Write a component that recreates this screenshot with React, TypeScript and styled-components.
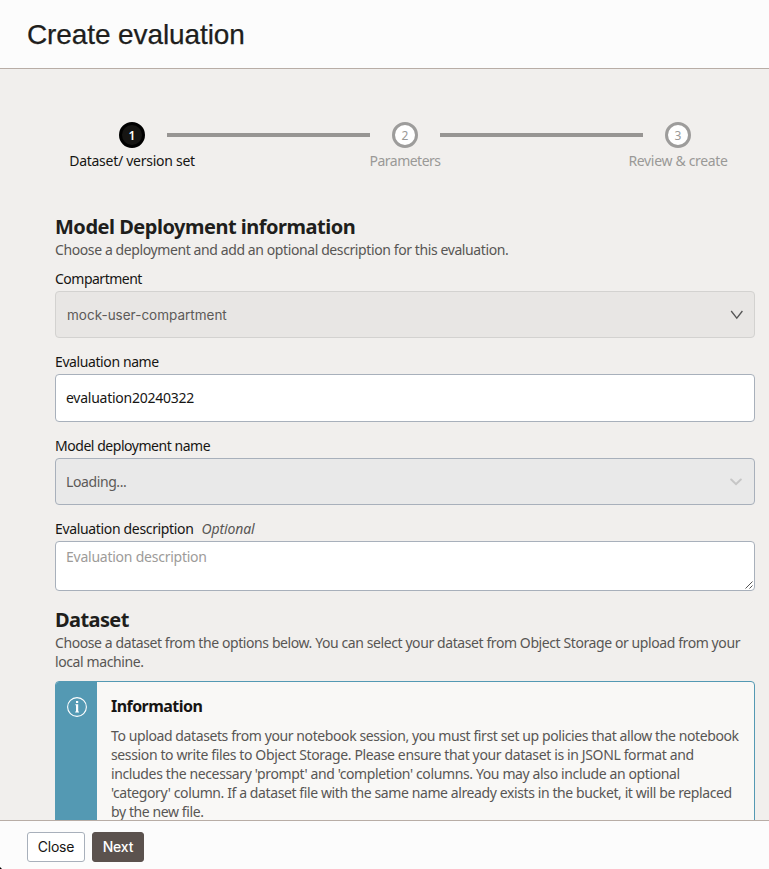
import React from 'react';
import styled, { createGlobalStyle } from 'styled-components';

const GlobalStyle = createGlobalStyle`
  * { box-sizing: border-box; }
  body { margin: 0; }
`;

const Page = styled.div`
  display: flex;
  flex-direction: column;
  width: 100%;
  height: 869px;
  overflow: hidden;
  background: #f1efed;
  color: #161513;
  font: 14px/19px 'Noto Sans', sans-serif;
`;

const Header = styled.header`
  flex: none;
  height: 69px;
  padding: 17px 27px 0;
  background: #fcfcfc;
  border-bottom: 1px solid #b8ada6;
`;

const Title = styled.h1`
  margin: 0;
  font: 400 28px/36px 'Liberation Sans', sans-serif;
  letter-spacing: -0.1px;
  color: #201e1c;
  -webkit-text-stroke: 0.25px #201e1c;
`;

const Content = styled.main`
  flex: 1;
  min-height: 0;
  overflow: hidden;
  padding: 53px 14px 0 55px;
`;

const Stepper = styled.div`
  display: flex;
  padding-left: 42px;
`;

const StepItem = styled.div<{ $active?: boolean }>`
  flex: none;
  width: 70px;
  display: flex;
  flex-direction: column;
  align-items: center;
  color: ${(p) => (p.$active ? '#161513' : '#9a9997')};
`;

const StepCircle = styled.div<{ $active?: boolean }>`
  width: 26px;
  height: 26px;
  display: flex;
  align-items: center;
  justify-content: center;
  border-radius: 50%;
  border: 3px solid ${(p) => (p.$active ? '#000' : '#9d9c9b')};
  background: ${(p) => (p.$active ? '#161513' : '#fff')};
  color: ${(p) => (p.$active ? '#fff' : '#9a9997')};
  font-size: 12px;
  font-weight: ${(p) => (p.$active ? 600 : 400)};
`;

const Line = styled.span<{ $spacing?: number }>`
  display: block;
  white-space: nowrap;
  letter-spacing: ${(p) => p.$spacing ?? -0.4}px;
`;

const StepLabel = styled(Line)`
  margin-top: 3px;
`;

const StepBar = styled.div`
  flex: none;
  width: 203px;
  height: 4px;
  margin-top: 11px;
  background: #979593;
`;

const SectionTitle = styled.h2<{ $spacing: number; $top: number }>`
  margin: ${(p) => p.$top}px 0 -1px;
  font-size: 20px;
  line-height: 28px;
  font-weight: 700;
  letter-spacing: ${(p) => p.$spacing}px;
  white-space: nowrap;
  color: #201e1c;
`;

const Description = styled.p`
  margin: 0;
  color: #585654;
`;

const Label = styled.label<{ $top: number }>`
  display: flex;
  gap: 8px;
  height: 19px;
  margin: ${(p) => p.$top}px 0 3px;
`;

const Optional = styled(Line)`
  font-style: italic;
  color: #585654;
`;

const Field = styled.div<{ $kind: 'readonly' | 'input' | 'loading' }>`
  display: flex;
  align-items: center;
  justify-content: space-between;
  height: ${(p) => (p.$kind === 'input' ? 48 : 47)}px;
  padding: ${(p) => ({ readonly: '1px 11px 0', input: '0 12px 2px 10px', loading: '0 12px 0 10px' })[p.$kind]};
  border: 1px solid ${(p) => (p.$kind === 'readonly' ? '#d3d2d0' : '#a8b0bb')};
  border-radius: 4px;
  background: ${(p) => ({ readonly: '#e8e6e4', input: '#fff', loading: '#e9e9e9' })[p.$kind]};
  color: ${(p) => (p.$kind === 'input' ? '#161513' : '#5c5a58')};
`;

const SystemLine = styled(Line)`
  font-family: Inter, sans-serif;
  font-size: 13.5px;
`;

const TextArea = styled.div`
  display: flex;
  justify-content: space-between;
  height: 50px;
  padding: 5px 1px 0 10px;
  border: 1px solid #a8b0bb;
  border-radius: 4px;
  background: #fff;
  color: #9d9b99;
`;

const Grip = styled.svg`
  flex: none;
  align-self: flex-end;
  margin-bottom: 1px;
`;

const InfoBox = styled.section`
  display: flex;
  height: 190px;
  margin-top: 10px;
  border: 1px solid #5499b3;
  border-radius: 4px;
  overflow: hidden;
  background: #f9f8f6;
`;

const InfoRail = styled.div`
  flex: none;
  width: 41px;
  padding: 14px 0 0 10px;
  background: #5499b3;
`;

const InfoBody = styled.div`
  padding: 14px 0 0 14px;
  color: #585654;
`;

const InfoTitle = styled.h3<{ $spacing: number }>`
  margin: 0 0 9px;
  font-size: 16px;
  line-height: 21px;
  font-weight: 700;
  letter-spacing: ${(p) => p.$spacing}px;
  color: #161513;
`;

const Footer = styled.footer`
  position: relative;
  flex: none;
  display: flex;
  gap: 7px;
  height: 49px;
  padding: 11px 27px 0;
  background: #fcfcfc;
  border-top: 1px solid #b8ada6;
`;

const Button = styled.button<{ $primary?: boolean }>`
  width: ${(p) => (p.$primary ? 52 : 58)}px;
  height: 30px;
  padding: 0;
  border: 1px solid ${(p) => (p.$primary ? '#5b524e' : '#a8b0bb')};
  border-radius: 3px;
  background: ${(p) => (p.$primary ? '#5b524e' : '#fff')};
  color: ${(p) => (p.$primary ? '#fff' : '#161513')};
  font: ${(p) => (p.$primary ? 500 : 400)} 14px/20px Inter, sans-serif;
  letter-spacing: -0.2px;
`;

const Corner = styled.div`
  position: absolute;
  left: 0;
  bottom: 0;
  width: 2px;
  height: 2px;
  background: #000;
  clip-path: polygon(0 0, 100% 100%, 0 100%);
`;

export default function App() {
  return (
    <Page>
      <GlobalStyle />
      <Header>
        <Title>Create evaluation</Title>
      </Header>
      <Content>
        <Stepper>
          <StepItem $active>
            <StepCircle $active>1</StepCircle>
            <StepLabel $spacing={-0.27}>Dataset/ version set</StepLabel>
          </StepItem>
          <StepBar />
          <StepItem>
            <StepCircle>2</StepCircle>
            <StepLabel $spacing={-0.5}>Parameters</StepLabel>
          </StepItem>
          <StepBar />
          <StepItem>
            <StepCircle>3</StepCircle>
            <StepLabel $spacing={-0.33}>Review &amp; create</StepLabel>
          </StepItem>
        </Stepper>

        <SectionTitle $spacing={-0.49} $top={43}>Model Deployment information</SectionTitle>
        <Description>
          <Line>Choose a deployment and add an optional description for this evaluation.</Line>
        </Description>

        <Label $top={10}><Line $spacing={-0.5}>Compartment</Line></Label>
        <Field $kind="readonly">
          <SystemLine $spacing={0}>mock-user-compartment</SystemLine>
          <svg width="13" height="10" viewBox="0 0 13 10" fill="none" stroke="#555" strokeWidth="1.3">
            <path d="M1.2 1 6.8 8.2 12.4 1" />
          </svg>
        </Field>

        <Label $top={14}><Line>Evaluation name</Line></Label>
        <Field $kind="input"><Line $spacing={-0.25}>evaluation20240322</Line></Field>

        <Label $top={14}><Line $spacing={-0.46}>Model deployment name</Line></Label>
        <Field $kind="loading">
          <Line>Loading...</Line>
          <svg width="12" height="8" viewBox="0 0 12 8" fill="none" stroke="#c6c6c6" strokeWidth="2" strokeLinecap="round">
            <path d="M1.2 1.5 6 6.2 10.8 1.5" />
          </svg>
        </Field>

        <Label $top={14}>
          <Line $spacing={-0.34}>Evaluation description</Line>
          <Optional $spacing={-0.12}>Optional</Optional>
        </Label>
        <TextArea>
          <Line $spacing={-0.24}>Evaluation description</Line>
          <Grip width="8" height="8" viewBox="0 0 8 8" stroke="#555" strokeWidth="1">
            <path d="M0.5 7.5 7.5 0.5M4.5 7.5 7.5 4.5" />
          </Grip>
        </TextArea>

        <SectionTitle $spacing={-0.6} $top={15}>Dataset</SectionTitle>
        <Description>
          <Line $spacing={-0.41}>Choose a dataset from the options below. You can select your dataset from Object Storage or upload from your</Line>
          <Line>local machine.</Line>
        </Description>

        <InfoBox>
          <InfoRail>
            <svg width="22" height="22" viewBox="0 0 22 22">
              <circle cx="11" cy="11" r="9.4" fill="none" stroke="#fff" strokeWidth="1.1" />
              <path d="M10 5h2.2v2H10zM9.4 8.2h2.8v7.2h.8v1H9.2v-1h.8V9.2h-.6z" fill="#fff" />
            </svg>
          </InfoRail>
          <InfoBody>
            <InfoTitle $spacing={-0.55}>Information</InfoTitle>
            <Line>To upload datasets from your notebook session, you must first set up policies that allow the notebook</Line>
            <Line $spacing={-0.37}>session to write files to Object Storage. Please ensure that your dataset is in JSONL format and</Line>
            <Line $spacing={-0.375}>includes the necessary 'prompt' and 'completion' columns. You may also include an optional</Line>
            <Line>'category' column. If a dataset file with the same name already exists in the bucket, it will be replaced</Line>
            <Line>by the new file.</Line>
          </InfoBody>
        </InfoBox>
      </Content>
      <Footer>
        <Button>Close</Button>
        <Button $primary>Next</Button>
        <Corner />
      </Footer>
    </Page>
  );
}
